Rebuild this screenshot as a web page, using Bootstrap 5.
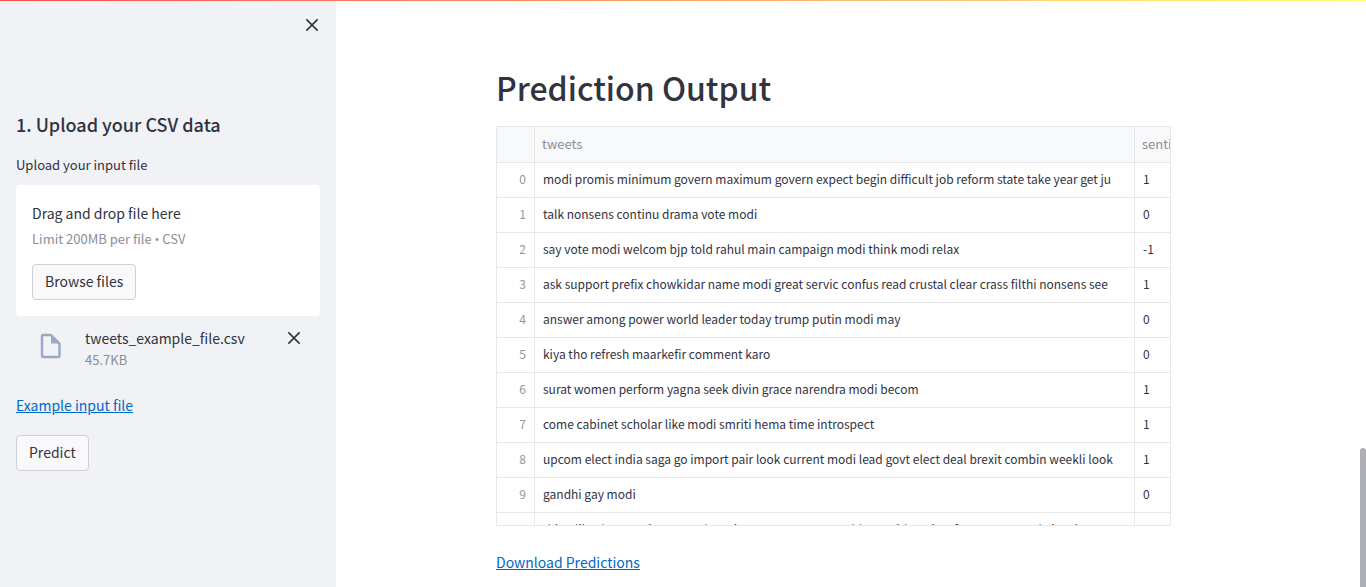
<!DOCTYPE html>
<html lang="en">
<head>
<meta charset="utf-8">
<meta name="viewport" content="width=device-width, initial-scale=1">
<title>Prediction Output</title>
<link href="https://cdn.jsdelivr.net/npm/bootstrap@5.3.0/dist/css/bootstrap.min.css" rel="stylesheet">
<style>
  body { font-family: "Noto Sans CJK SC", sans-serif; font-size: 14px; line-height: 24px; color: #31333f; }
  h1, h2 { font-weight: 500; }
  h1 { font-size: 32px; line-height: 40px; padding-top: 67px; margin-bottom: 19px; }
  h2 { font-size: 18px; line-height: 24px; }
  a { color: #0068c9; }
  .accent-bar { height: 1px; z-index: 5; background: linear-gradient(90deg, #ff4b4b, #fffd80); }
  .side-panel { width: 336px; background: #f0f2f6; }
  .side-head { height: 112px; padding-top: 17px; }
  .icon-button { width: 16px; height: 16px; color: #31333f; }
  .fine-text { font-size: 13px; line-height: 19px; }
  .upload-label { padding-top: 3px; margin-bottom: 11px; }
  .limit-note { padding-top: 4px; margin-bottom: 15px; }
  .bullet { font-family: "Open Sans", sans-serif; }
  .faded { color: #8b8d97; }
  .drop-zone { border-radius: 4px; }
  .soft-button { padding: 4px 12px 6px; --bs-btn-font-size: 14px; --bs-btn-line-height: 24px; --bs-btn-border-radius: 4px; --bs-btn-bg: #f9f9fb; --bs-btn-color: #31333f; --bs-btn-border-color: #d0d1d6; }
  .file-row { padding: 10px 18px 0 16px; }
  .file-row .file-icon { margin: 6px 15px 0 4px; }
  .predict-gap { margin-bottom: 18px; }
  .main-area { padding-right: 6px; }
  .main-column { max-width: 736px; }
  .grid-frame { max-width: 675px; height: 400px; border: 1px solid #e6e7e9; }
  .data-grid { table-layout: fixed; border-collapse: separate; border-spacing: 0; width: 100%; font-size: 12px; line-height: 18px; }
  .data-grid th, .data-grid td { height: 35px; padding: 0 8px 3px; overflow: hidden; white-space: nowrap; font-weight: 400; border: 0 solid #e6e7e9; border-width: 0 1px 1px 0; }
  .data-grid th:last-child, .data-grid td:last-child { border-right: 0; padding-right: 0; }
  .data-grid thead th { height: 36px; padding-left: 7px; padding-bottom: 1px; background: #f8f9fb; color: #8b8d97; font-size: 13px; }
  .data-grid tbody th { text-align: right; color: #9496a0; }
  .index-col { width: 38px; }
  .value-col { width: 35px; }
  .scroll-thumb { width: 6px; height: 139px; border-radius: 6px 6px 0 0; background: #adaeb3; }
</style>
</head>
<body>
<div class="accent-bar position-absolute top-0 start-0 w-100"></div>
<div class="d-flex min-vh-100">
  <aside class="side-panel flex-shrink-0 px-3">
    <div class="side-head d-flex justify-content-end align-items-start">
      <button class="icon-button btn border-0 p-0 d-flex" type="button" aria-label="Close sidebar">
        <svg width="16" height="16" viewBox="0 0 16 16" fill="none" stroke="currentColor" stroke-width="1.6"><path d="M2.400 2.400 13.600 13.600M13.600 2.400 2.400 13.600"/></svg>
      </button>
    </div>
    <h2 class="mb-3">1. Upload your CSV data</h2>
    <label class="fine-text upload-label d-block" for="csvFile">Upload your input file</label>
    <section class="drop-zone bg-white p-3">
      <input class="visually-hidden" type="file" id="csvFile" accept=".csv" tabindex="-1">
      <div>Drag and drop file here</div>
      <div class="fine-text faded limit-note">Limit 200MB per file <span class="bullet">•</span> CSV</div>
      <button class="btn soft-button" type="button">Browse files</button>
    </section>
    <div class="file-row d-flex">
      <svg class="file-icon flex-shrink-0" width="30" height="30" viewBox="0 0 30 30"><path fill="none" stroke="#9aa8c8" stroke-width="2.4" stroke-linejoin="round" d="M7 3H15L23.500 11.500V23.500Q23.500 25 22 25H7.500Q6 25 6 23.500V4.500Q6 3 7.500 3Z"/><path fill="#9aa8c8" d="M15 2.500V11.500H24Z"/></svg>
      <div class="flex-grow-1 ms-1">
        <div>tweets_example_file.csv</div>
        <div class="fine-text faded">45.7KB</div>
      </div>
      <button class="icon-button btn border-0 p-0 d-flex mt-1" type="button" aria-label="Remove file">
        <svg width="16" height="16" viewBox="0 0 16 16" fill="none" stroke="currentColor" stroke-width="1.6"><path d="M2.400 2.400 13.600 13.600M13.600 2.400 2.400 13.600"/></svg>
      </button>
    </div>
    <p class="mt-4 predict-gap"><a href="#">Example input file</a></p>
    <button class="btn soft-button" type="button">Predict</button>
  </aside>
  <main class="main-area flex-grow-1 position-relative">
    <div class="main-column mx-auto px-3">
      <h1>Prediction Output</h1>
      <div class="grid-frame overflow-hidden mb-4">
        <table class="data-grid">
          <colgroup><col class="index-col"><col><col class="value-col"></colgroup>
          <thead><tr><th></th><th scope="col">tweets</th><th scope="col">senti</th></tr></thead>
          <tbody>
            <tr><th scope="row">0</th><td>modi promis minimum govern maximum govern expect begin difficult job reform state take year get ju</td><td>1</td></tr>
            <tr><th scope="row">1</th><td>talk nonsens continu drama vote modi</td><td>0</td></tr>
            <tr><th scope="row">2</th><td>say vote modi welcom bjp told rahul main campaign modi think modi relax</td><td>-1</td></tr>
            <tr><th scope="row">3</th><td>ask support prefix chowkidar name modi great servic confus read crustal clear crass filthi nonsens see</td><td>1</td></tr>
            <tr><th scope="row">4</th><td>answer among power world leader today trump putin modi may</td><td>0</td></tr>
            <tr><th scope="row">5</th><td>kiya tho refresh maarkefir comment karo</td><td>0</td></tr>
            <tr><th scope="row">6</th><td>surat women perform yagna seek divin grace narendra modi becom</td><td>1</td></tr>
            <tr><th scope="row">7</th><td>come cabinet scholar like modi smriti hema time introspect</td><td>1</td></tr>
            <tr><th scope="row">8</th><td>upcom elect india saga go import pair look current modi lead govt elect deal brexit combin weekli look</td><td>1</td></tr>
            <tr><th scope="row">9</th><td>gandhi gay modi</td><td>0</td></tr>
            <tr><th scope="row">10</th><td>thing like demonetis gst good servic tax upper cast would sort either view favour say need give time</td><td>1</td></tr>
          </tbody>
        </table>
      </div>
      <p class="mb-0"><a href="#">Download Predictions</a></p>
    </div>
    <div class="scroll-thumb position-absolute bottom-0 end-0"></div>
  </main>
</div>
<script src="https://cdn.jsdelivr.net/npm/bootstrap@5.3.0/dist/js/bootstrap.bundle.min.js"></script>
</body>
</html>
